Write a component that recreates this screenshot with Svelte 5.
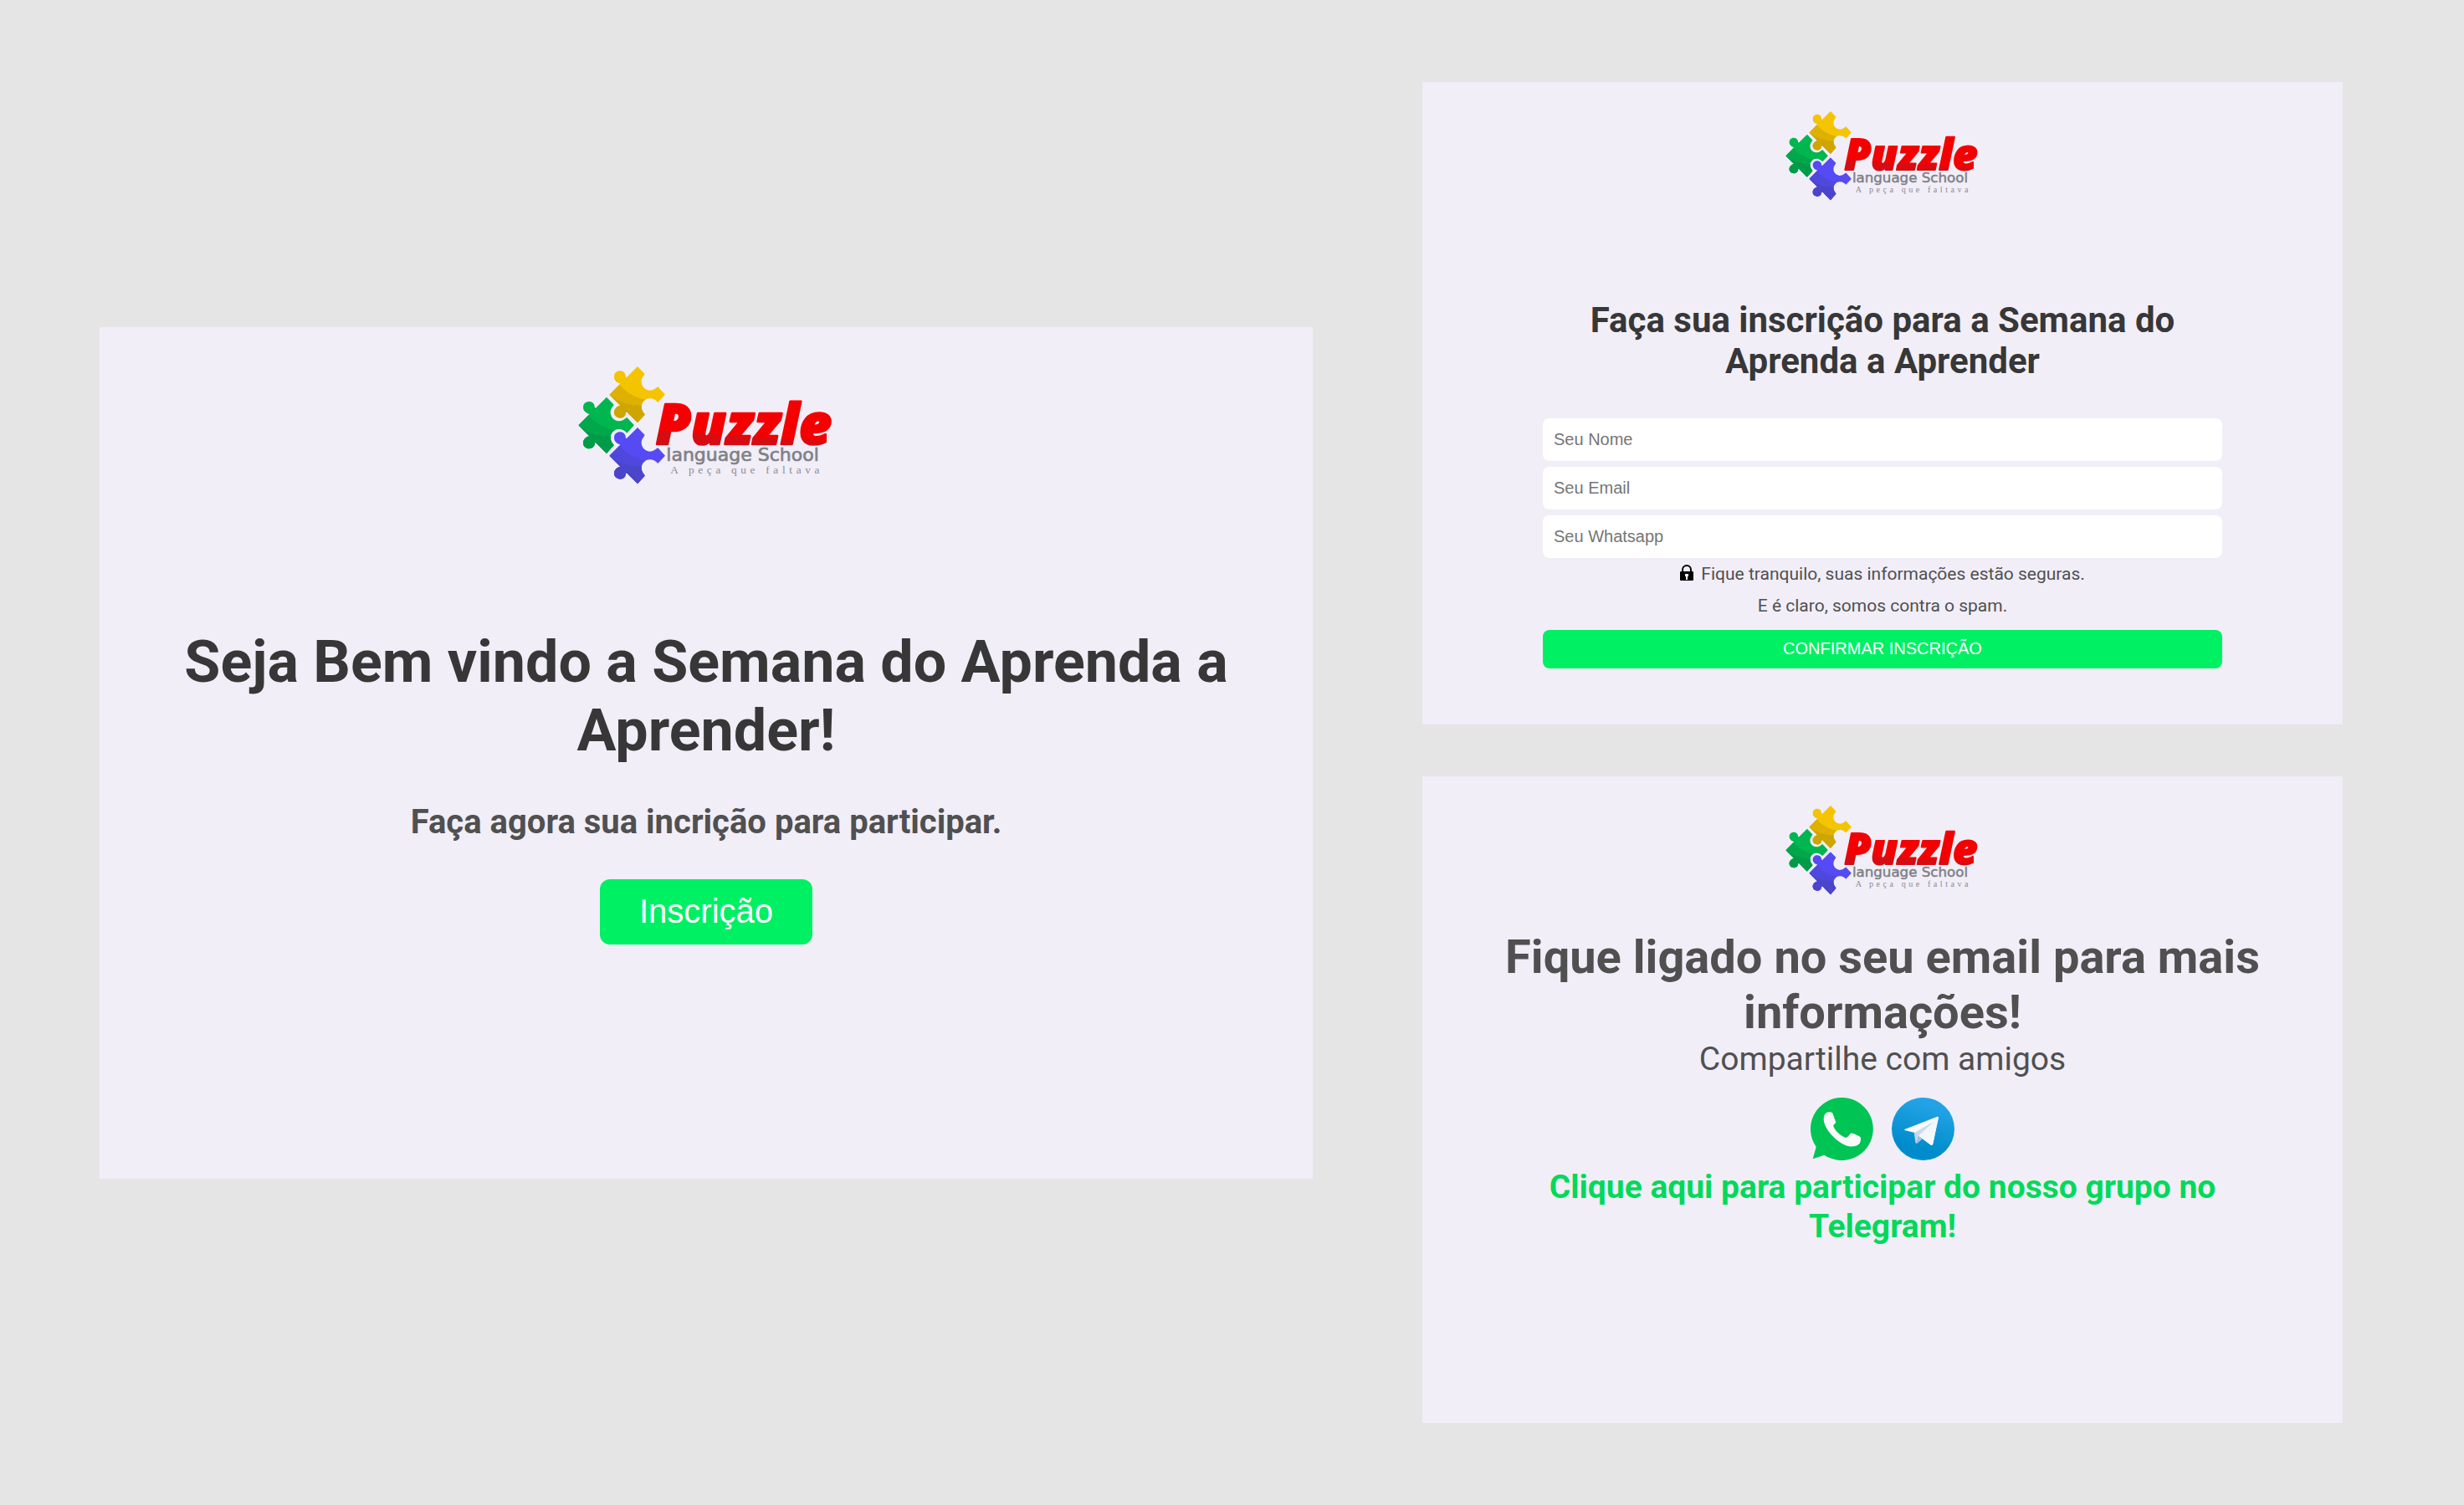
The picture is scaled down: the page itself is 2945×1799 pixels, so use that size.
<script>
  const fields = [
    { id: 'nome', type: 'text', label: 'Seu Nome' },
    { id: 'email', type: 'email', label: 'Seu Email' },
    { id: 'whatsapp', type: 'tel', label: 'Seu Whatsapp' }
  ];
  const pieces = [
    { name: 'yellow', x: 0, y: 0 },
    { name: 'green', x: -111, y: 110 },
    { name: 'blue', x: 0, y: 219 }
  ];
  const outline =
    'M148 152 L187 113 C178 108 165 102 165 86 C166 62 202 60 206 83 C206 88 207 90 210 90 L249 51 L275 78 C271 86 263 92 263 106 C263 122 275 136 292 137 C307 137 312 130 322 124 L348 152 L322 180 C316 174 307 166 293 166 C276 166 263 180 263 196 C263 210 271 216 275 224 L249 253 L210 214 C207 214 206 216 206 221 C202 242 166 240 165 216 C165 202 176 194 187 191 Z';
</script>

{#snippet logo(id)}
  <svg class="logo" viewBox="0 0 990 510" role="img" aria-label="Puzzle language School">
    <defs>
      <clipPath id="{id}-piece"><path d={outline} /></clipPath>
      <linearGradient id="{id}-red" gradientUnits="userSpaceOnUse" x1="600" y1="180" x2="590" y2="340">
        <stop offset="0.74" stop-color="#f50000" />
        <stop offset="0.75" stop-color="#d60c12" />
      </linearGradient>
    </defs>
    {#each pieces as p}
      <g class={p.name} transform="translate({p.x} {p.y})">
        <g clip-path="url(#{id}-piece)">
          <rect class="light" x="140" y="40" width="220" height="220" />
          <path class="mid" d="M140 60 L176 104 C200 140 240 168 296 172 L296 260 L140 260 Z" />
          <path class="dark" d="M140 146 C168 172 205 190 262 191 L300 260 L140 260 Z" />
        </g>
      </g>
    {/each}
    <text class="word" x="315" y="329" fill="url(#{id}-red)" stroke="url(#{id}-red)">Puzzle</text>
    <text class="school" x="352" y="390">language School</text>
    <text class="tagline" x="367" y="434">A peça que faltava</text>
  </svg>
{/snippet}

<main>
  <section class="panel welcome">
    {@render logo('a')}
    <h1>Seja Bem vindo a Semana do Aprenda a Aprender!</h1>
    <p class="lead">Faça agora sua incrição para participar.</p>
    <button class="start" type="button">Inscrição</button>
  </section>

  <div class="column">
    <section class="panel signup">
      {@render logo('b')}
      <form>
        <h2>Faça sua inscrição para a Semana do Aprenda a Aprender</h2>
        {#each fields as f}
          <input id={f.id} type={f.type} placeholder={f.label} aria-label={f.label} />
        {/each}
        <p class="note">
          <svg class="lock" viewBox="0 0 16 20" aria-hidden="true">
            <path d="M3 9V6a5 5 0 0 1 10 0v3" fill="none" stroke="#000" stroke-width="2" />
            <path fill-rule="evenodd" d="M1 8h14q1 0 1 1v9q0 1-1 1H1q-1 0-1-1V9q0-1 1-1zM6 11v3h1v4h2v-4h1v-3z" />
          </svg>
          Fique tranquilo, suas informações estão seguras.<br />
          E é claro, somos contra o spam.
        </p>
        <button class="confirm" type="button">CONFIRMAR INSCRIÇÃO</button>
      </form>
    </section>

    <section class="panel thanks">
      {@render logo('c')}
      <h2>Fique ligado no seu email para mais informações!</h2>
      <p class="share">Compartilhe com amigos</p>
      <div class="icons">
        <a href="#whatsapp" aria-label="WhatsApp">
          <svg viewBox="0 0 224 224">
            <path fill="#00c454" d="M112 0a112 112 0 1 1-63 205L8 219l12-43A112 112 0 0 1 112 0z" />
            <path fill="#fafafa" d="M57 54c8-4 19-3 22 2l11 31c1 4-9 10-9 14 5 17 29 39 46 42 7-1 12-12 18-16 4-2 29 10 33 14 3 4 1 15-2 21-6 10-22 14-38 12-38-6-89-60-91-94-1-12 3-22 10-26z" />
          </svg>
        </a>
        <a href="#telegram" aria-label="Telegram">
          <svg viewBox="0 0 224 224">
            <defs>
              <linearGradient id="sky" x1="0.6" y1="0.1" x2="0.4" y2="0.8">
                <stop offset="0" stop-color="#23a3e6" />
                <stop offset="1" stop-color="#008ccc" />
              </linearGradient>
              <linearGradient id="wing" x1="0" y1="0" x2="1" y2="1">
                <stop offset="0" stop-color="#e4effa" />
                <stop offset="1" stop-color="#fff" />
              </linearGradient>
            </defs>
            <circle cx="112" cy="112" r="112" fill="url(#sky)" />
            <path fill="#fafcfe" d="M47 113 163 68q5-1 4 5l-20 93q-2 7-8 3l-43-32-16-12-32-8q-4-2-1-4z" />
            <path fill="#c8d8ee" d="M80 126 152 84 96 137 89 162q-2 3-4-1z" />
            <path fill="#a9bfde" d="M89 163 96 137 110 147 92 163q-2 1-3 0z" />
            <path fill="url(#wing)" d="M96 137 152 84l14-12-19 94q-2 7-8 3z" />
          </svg>
        </a>
      </div>
      <a class="group" href="#grupo">Clique aqui para participar do nosso grupo no Telegram!</a>
    </section>
  </div>
</main>

<style>
  :global(body) {
    background: #e5e5e5;
  }
  main {
    display: grid;
    grid-template-columns: 1450fr 1100fr;
    column-gap: 131px;
    align-items: center;
    padding: 98px 145px 98px 119px;
    font-family: Roboto, sans-serif;
    color: #505050;
    text-align: center;
  }
  h1,
  h2,
  p {
    margin: 0;
  }
  h1,
  h2 {
    font-weight: 700;
  }
  .column {
    display: grid;
    gap: 62px;
  }
  .panel {
    box-sizing: border-box;
    display: flex;
    flex-direction: column;
    align-items: center;
    background: #f1eef8;
  }
  .welcome {
    min-height: 1018px;
    padding: 30px 90px;
  }
  .signup {
    min-height: 768px;
    padding: 22px 144px;
  }
  .thanks {
    min-height: 773px;
    padding: 22px 90px;
  }
  .logo {
    display: block;
    width: 250px;
    height: auto;
  }
  .welcome .logo {
    width: 330px;
  }
  .yellow .light { fill: #f5c400; }
  .yellow .mid { fill: #deb100; }
  .yellow .dark { fill: #cfa500; }
  .green .light { fill: #00b64f; }
  .green .mid { fill: #00a74b; }
  .green .dark { fill: #009b48; }
  .blue .light { fill: #554af3; }
  .blue .mid { fill: #4f48dc; }
  .blue .dark { fill: #4a45ca; }
  .word {
    font: italic 800 202px "Open Sans", sans-serif;
    stroke-width: 8px;
    stroke-linejoin: round;
  }
  .school {
    font: 66px "DejaVu Sans", sans-serif;
    fill: #808086;
    stroke: #808086;
    stroke-width: 2px;
  }
  .tagline {
    font: 40px "Liberation Serif", serif;
    letter-spacing: 14px;
    fill: #8c8c92;
  }
  h1 {
    margin-top: 159px;
    font-size: 70px;
    line-height: 82px;
    color: #373737;
  }
  .lead {
    margin-top: 45px;
    font-size: 40px;
    line-height: 47px;
    font-weight: 700;
  }
  button {
    border: 0;
    background: #00f064;
    color: #fff;
    font-family: "Liberation Sans", sans-serif;
  }
  .start {
    margin-top: 45px;
    height: 78px;
    padding: 0 47px;
    border-radius: 12px;
    font-size: 40px;
  }
  form {
    display: flex;
    flex-direction: column;
    align-self: stretch;
    gap: 7px;
    margin-top: 109px;
  }
  form h2 {
    margin-bottom: 37px;
    font-size: 42px;
    line-height: 49px;
    color: #373737;
  }
  input {
    box-sizing: border-box;
    height: 51px;
    padding: 0 13px;
    border: 0;
    border-radius: 8px;
    background: #fff;
    font: 20px "Liberation Sans", sans-serif;
  }
  input::placeholder {
    color: #757575;
  }
  .note {
    margin-top: -7px;
    font-size: 21px;
    line-height: 38px;
  }
  .lock {
    width: 16px;
    height: 20px;
    margin-right: 4px;
    vertical-align: -2px;
  }
  .confirm {
    margin-top: 3px;
    height: 46px;
    border-radius: 8px;
    font-size: 20px;
  }
  .thanks h2 {
    margin-top: 32px;
    font-size: 56px;
    line-height: 66px;
  }
  .share {
    font-size: 39px;
    line-height: 47px;
  }
  .icons {
    display: flex;
    gap: 22px;
    margin: 22px 0 9px;
  }
  .icons svg {
    display: block;
    width: 75px;
    height: 75px;
  }
  .group {
    padding: 0 40px;
    font-size: 39px;
    line-height: 47px;
    font-weight: 700;
    color: #00d95a;
    text-decoration: none;
  }
</style>
